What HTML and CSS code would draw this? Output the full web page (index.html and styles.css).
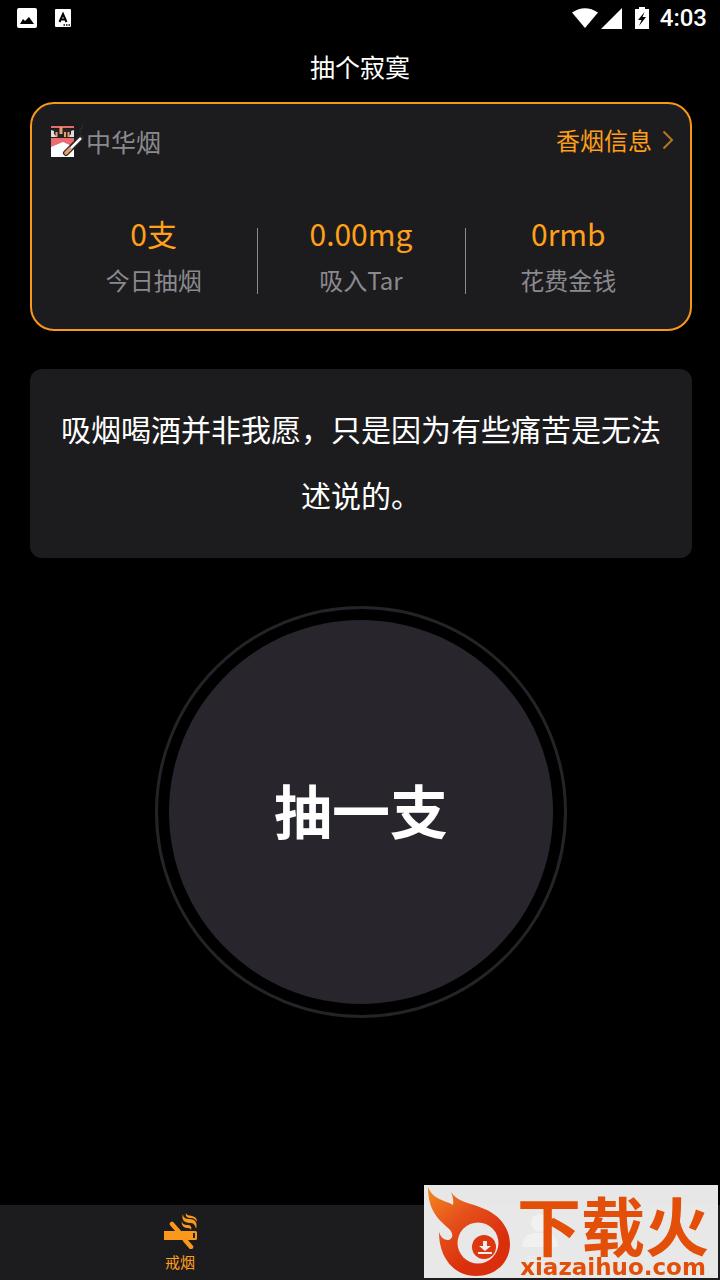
FILE: index.html
```html
<!DOCTYPE html>
<html lang="zh-CN">
<head>
<meta charset="utf-8">
<meta name="viewport" content="width=device-width, initial-scale=1">
<title>抽个寂寞</title>
<link rel="stylesheet" href="styles.css">
</head>
<body>
<div class="status">
  <div class="status-group notices">
    <svg width="20" height="20" viewBox="0 0 20 20"><rect width="20" height="20" rx="2" fill="#fff"/><path d="M3 16l3-5 2 2 4-4 5 7z" fill="#000"/></svg>
    <svg width="16" height="18" viewBox="0 0 16 18"><rect width="16" height="18" rx="1" fill="#fff"/><path d="M4.500 13L8 5l3.500 8M6 10.500h4" fill="none" stroke="#000" stroke-width="2"/><path d="M8.500 16H10M11 16h1.500M13.500 16H15" stroke="#000" stroke-width="1.500"/></svg>
  </div>
  <div class="status-group">
    <svg width="26" height="20" viewBox="0 0 26 20"><path d="M0 4.500Q13-4 26 4.500L13 20z" fill="#fff"/></svg>
    <svg class="signal" width="21" height="21" viewBox="0 0 21 21"><path d="M21 0v21H0z" fill="#fff"/></svg>
    <svg class="battery" width="14" height="22" viewBox="0 0 14 22"><path d="M4 0h6v2h4v20H0V2h4z" fill="#fff"/><path d="M9.500 5L3 13h3.500L4 19l7-9H7.500z" fill="#000"/></svg>
    <time class="clock">4:03</time>
  </div>
</div>
<h1 class="title">抽个寂寞</h1>
<main class="content">
  <section class="card summary">
    <div class="summary-head">
      <div class="brand">
        <svg width="34" height="34" viewBox="0 0 34 34">
          <path d="M1 5h23v28H1z" fill="#fff"/><path d="M1 2h23v2H1z" fill="#e36c6c"/>
          <path d="M1 5h23v9H1z" fill="#282225"/><path d="M1 6l3 1v3l3 3H1zM24 6l-3 1v3l-3 3h6z" fill="#ddd"/>
          <path d="M5.500 8h2v5h-2zM9.500 3h3v7h-3zM14 8h2v5h-2zM17.500 8h2v5h-2z" fill="#eba068"/>
          <path d="M1 14h23v9l-11-5-12 5z" fill="#e96d70"/>
          <path d="M16 29L31 14" stroke="#282527" stroke-width="6" stroke-linecap="round"/><path d="M20 25L31 14" stroke="#fff" stroke-width="2.500"/><path d="M16 29l4-4" stroke="#e8a26c" stroke-width="3.500" stroke-linecap="round"/>
          <path d="M31 9c-4-3 4-5 1-9" fill="none" stroke="#29292b" stroke-width="1.500"/>
        </svg>
        <span>中华烟</span>
      </div>
      <a class="info" href="#info">香烟信息<svg width="12" height="20" viewBox="0 0 12 20"><path d="M1.500 1.500L10 10l-8.500 8.500" fill="none" stroke="#b6771e" stroke-width="2"/></svg></a>
    </div>
    <dl class="stats">
      <div class="stat"><dd>0支</dd><dt>今日抽烟</dt></div>
      <div class="stat"><dd>0.00mg</dd><dt>吸入Tar</dt></div>
      <div class="stat"><dd>0rmb</dd><dt>花费金钱</dt></div>
    </dl>
  </section>
  <p class="card quote">吸烟喝酒并非我愿，只是因为有些痛苦是无法述说的。</p>
  <button class="smoke" type="button"><span class="smoke-disc">抽一支</span></button>
</main>
<nav class="tabs">
  <a class="tab active" href="#quit">
    <svg width="36" height="36" viewBox="0 0 36 36"><path d="M10 11l7 8M23 27l6 7" stroke="#f9981b" stroke-width="4.500" stroke-linecap="round"/><path d="M21 1c0 4 3 5 7 5c5 0 8 4 6 10c-1-5-3-6-6-6c-6 0-9-4-7-9zM20 8c0 3 3 4 5 4c4 0 5 2 4 5c-1-2-2-2-4-2c-4 0-6-4-5-7zM24 0c1 3 3 2 6 3c4 1 5 3 5 6c-1-2-3-4-6-4c-4 0-6-2-5-5z" fill="#f9981b"/><path d="M2 18h31.500a1.500 1.500 0 0 1 1.500 1.500v6a1.500 1.500 0 0 1-1.500 1.500H2z" fill="#f9981b"/><path d="M31 20h2v5h-2z" fill="#29231c"/></svg>
    <span>戒烟</span>
  </a>
  <a class="tab" href="#mine">
    <svg width="36" height="36" viewBox="0 0 36 36"><circle cx="18" cy="10" r="9" fill="#fff"/><path d="M0 34c0-9 6-13 12-14h12c6 1 12 5 12 14z" fill="#fff"/></svg>
    <span>我的</span>
  </a>
</nav>
<div class="watermark">
  <svg width="88" height="93" viewBox="0 0 88 93">
    <defs><linearGradient id="flame" x1="0" y1="0" x2=".6" y2=".8"><stop offset="0" stop-color="#f58a1c"/><stop offset=".5" stop-color="#e5501b"/><stop offset="1" stop-color="#da2f0d"/></linearGradient></defs>
    <path d="M4 2C9 15 21 15 29 20Q30 14 27 7C33 17 47 18 58 23C75 29 86 43 86 59C86 78 71 91 52 91C31 91 15 74 15 47Q18 56 25 55C30 53 29 47 24 43C14 34 4 25 4 2z" fill="url(#flame)"/>
    <circle cx="54" cy="58" r="20.500" fill="#e8e8e8"/><circle cx="60" cy="62" r="12" fill="#de3710"/>
    <path d="M59 56h4v5h4l-6 5-6-5h4zM54 67h14v2H54z" fill="#eee"/>
  </svg>
  <div class="watermark-text"><strong>下载火</strong><span>xiazaihuo.com</span></div>
</div>
</body>
</html>
```
FILE: styles.css
```css
* { box-sizing: border-box; }
body {
  margin: 0;
  min-height: 100vh;
  display: flex;
  flex-direction: column;
  background: #000;
  color: #fff;
  font-family: "Noto Sans CJK SC", sans-serif;
}
svg { display: block; flex: none; }
a { color: inherit; text-decoration: none; }
.status {
  display: flex;
  justify-content: space-between;
  height: 36px;
  padding: 0 13px 0 17px;
}
.status-group { display: flex; align-items: center; }
.notices { gap: 18px; }
.signal { margin-left: 3px; }
.battery { margin: 0 11px 0 13px; }
.clock { font: 500 24px/36px Roboto, sans-serif; }
.title {
  margin: 0;
  height: 66px;
  font-size: 25px;
  font-weight: 400;
  line-height: 60px;
  text-align: center;
}
.content {
  flex: 1;
  display: flex;
  flex-direction: column;
  padding: 0 28px 0 30px;
}
.card { background: #1c1c1e; border-radius: 12px; }
.summary {
  padding: 19px 16px 29px 18px;
  border: 2px solid #f7981a;
  border-radius: 24px;
}
.summary-head {
  display: flex;
  justify-content: space-between;
  align-items: center;
  height: 36px;
}
.brand { display: flex; align-items: center; gap: 2px; color: #8a898e; font-size: 25px; }
.info { display: flex; align-items: center; gap: 10px; color: #ff9f1a; font-size: 24px; line-height: 36px; padding-bottom: 2px; }
.stats {
  display: grid;
  grid-template-columns: repeat(3, 1fr);
  margin: 51px 2px 0 0;
  text-align: center;
}
.stat { display: flex; flex-direction: column; gap: 4px; position: relative; }
.stat + .stat::before {
  content: "";
  position: absolute;
  left: 0;
  top: 18px;
  bottom: 6px;
  width: 1px;
  background: #8a898e;
}
.stat dd { margin: 0; color: #ff9f1a; font-size: 30px; line-height: 46px; }
.stat dt { color: #8a898e; font-size: 24px; line-height: 40px; }
.quote {
  margin: 38px 0 48px;
  padding: 26px 30px 31px;
  font-size: 30px;
  line-height: 66px;
  text-align: center;
}
.smoke {
  align-self: center;
  padding: 11px;
  border: 3px solid #242327;
  border-radius: 50%;
  background: none;
  color: #fff;
  font-family: inherit;
  font-size: 58px;
  font-weight: 700;
}
.smoke-disc {
  display: grid;
  place-items: center;
  width: 384px;
  aspect-ratio: 1;
  padding-bottom: 6px;
  border-radius: 50%;
  background: #28252c;
}
.tabs {
  display: grid;
  grid-template-columns: 1fr 1fr;
  height: 75px;
  background: #1c1c1e;
}
.tab {
  display: flex;
  flex-direction: column;
  align-items: center;
  padding-top: 8px;
  color: #aaa;
  font-size: 15px;
  line-height: 25px;
}
.active { color: #ff9f1a; }
.watermark {
  position: fixed;
  right: 2px;
  bottom: 2px;
  display: flex;
  width: 294px;
  height: 93px;
  background: rgba(240, 240, 240, .96);
  color: #e34f08;
}
.watermark-text {
  display: flex;
  flex-direction: column;
  align-items: center;
  justify-content: flex-end;
  flex: 1;
  padding-right: 4px;
}
.watermark strong { font-size: 64px; font-weight: 700; line-height: 66px; white-space: nowrap; }
.watermark span { font: 700 23px/22px "DejaVu Sans", sans-serif; }
```
